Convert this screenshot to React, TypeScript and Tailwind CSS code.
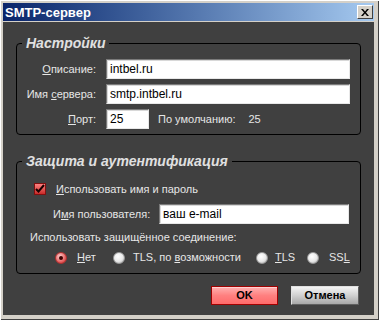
import React from 'react';

const ui = { fontFamily: '"Liberation Sans", Arial, sans-serif' };

function Field({ value, className }: { value: string; className: string }) {
  return (
    <div
      className={`h-[20px] bg-white border border-t-[#7a7a7a] border-l-[#7a7a7a] border-r-[#e8e8e8] border-b-[#e8e8e8] shadow-[inset_1px_1px_0_#d8d8d8] flex items-center pl-[3px] text-[12px] text-black ${className}`}
    >
      {value}
    </div>
  );
}

function Radio({ checked }: { checked?: boolean }) {
  return checked ? (
    <span className="shrink-0 w-[12px] h-[12px] rounded-full border border-[#b03030] bg-[radial-gradient(circle_at_40%_35%,#ffd0d0,#e05050_70%,#a02020)] flex items-center justify-center">
      <span className="w-[4px] h-[4px] rounded-full bg-[#400000]" />
    </span>
  ) : (
    <span className="shrink-0 w-[12px] h-[12px] rounded-full border border-[#9a9a9a] bg-[radial-gradient(circle_at_40%_35%,#ffffff,#e8e8e8_55%,#a0a0a0)]" />
  );
}

export default function App() {
  return (
    <div
      className="w-[379px] h-[320px] bg-[#d4d0c8] pt-[3px] pl-[3px] pr-[5px] pb-[5px] flex flex-col shadow-[inset_1px_1px_0_#ffffff,inset_-1px_-1px_0_#404040]"
      style={ui}
    >
      {/* Title bar */}
      <div className="h-[18px] bg-gradient-to-r from-[#0a246a] to-[#a6caf0] flex items-center justify-between pl-[2px] pr-[1px]">
        <span className="text-white font-bold text-[13px] leading-none">SMTP-сервер</span>
        <button className="w-[16px] h-[14px] bg-[#d4d0c8] border border-t-white border-l-white border-r-[#404040] border-b-[#404040] flex items-center justify-center">
          <svg width="8" height="7" viewBox="0 0 8 7">
            <path d="M0 0h2l2 2.5L6 0h2L5 3.5 8 7H6L4 4.5 2 7H0l3-3.5z" fill="#000" />
          </svg>
        </button>
      </div>
      <div className="h-[1px] bg-[#d4d0c8]" />

      {/* Body */}
      <div className="flex-1 bg-[#404040] flex flex-col text-[11px] text-[#e6e6e6] whitespace-nowrap">
        <fieldset className="mt-[13px] ml-[13px] w-[344px] border border-black rounded-[4px] pb-[5px]">
          <legend className="ml-[5px] px-[4px] text-[14px] leading-[16px] font-bold italic text-[#e0e0e0]">
            Настройки
          </legend>
          <div className="grid grid-cols-[79px_1fr] gap-x-[10px] gap-y-[5px] pt-[8px] pr-[10px] items-center">
            <span className="text-right">
              <u>О</u>писание:
            </span>
            <Field value="intbel.ru" className="w-[244px]" />
            <span className="text-right">
              Имя <u>с</u>ервера:
            </span>
            <Field value="smtp.intbel.ru" className="w-[244px]" />
            <span className="text-right">
              <u>П</u>орт:
            </span>
            <div className="flex items-center">
              <Field value="25" className="w-[43px]" />
              <span className="ml-[9px]">По умолчанию:</span>
              <span className="ml-[13px]">25</span>
            </div>
          </div>
        </fieldset>

        <fieldset className="mt-[18px] ml-[13px] w-[344px] border border-black rounded-[4px] pb-[8px]">
          <legend className="ml-[5px] px-[4px] text-[14px] leading-[16px] font-bold italic text-[#e0e0e0]">
            Защита и аутентификация
          </legend>
          <div className="flex flex-col pt-[14px] pl-[17px] pr-[10px]">
            <label className="flex items-center gap-[10px] h-[12px]">
              <span className="w-[12px] h-[12px] border border-[#801010] bg-gradient-to-b from-[#ff8080] to-[#c82828] flex items-center justify-center">
                <svg width="10" height="10" viewBox="0 0 10 10">
                  <path d="M1 5l2.5 2.5L9 1" stroke="#1a0000" strokeWidth="2" fill="none" />
                </svg>
              </span>
              <span>
                <u>И</u>спользовать имя и пароль
              </span>
            </label>
            <div className="flex items-center mt-[9px] pl-[19px]">
              <span className="w-[106px]">
                И<u>м</u>я пользователя:
              </span>
              <Field value="ваш e-mail" className="w-[190px] h-[16px]" />
            </div>
            <span className="mt-[5px] -ml-[4px]">Использовать защищённое соединение:</span>
            <div className="flex items-center mt-[5px] pl-[21px] h-[14px]">
              <label className="flex items-center gap-[10px] w-[58px] shrink-0">
                <Radio checked />
                <span>
                  <u>Н</u>ет
                </span>
              </label>
              <label className="flex items-center gap-[8px] w-[143px] shrink-0">
                <Radio />
                <span>
                  TLS, по <u>в</u>озможности
                </span>
              </label>
              <label className="flex items-center gap-[7px] w-[51px] shrink-0">
                <Radio />
                <span>
                  <u>T</u>LS
                </span>
              </label>
              <label className="flex items-center gap-[10px] shrink-0">
                <Radio />
                <span>
                  SS<u>L</u>
                </span>
              </label>
            </div>
          </div>
        </fieldset>

        <div className="flex justify-end gap-[13px] mt-[12px] pr-[15px]">
          <button className="w-[67px] h-[19px] border border-[#a00000] bg-gradient-to-b from-[#ffb0b0] via-[#ff8080] to-[#ff6a6a] shadow-[inset_0_1px_0_#ffd0d0] text-black font-bold text-[11px]">
            OK
          </button>
          <button className="w-[68px] h-[19px] border border-[#e0e0e0] border-r-[#606060] border-b-[#606060] bg-gradient-to-b from-[#f4f4f4] via-[#d0d0d0] to-[#a8a8a8] text-black font-bold text-[11px]">
            Отмена
          </button>
        </div>
      </div>
    </div>
  );
}
